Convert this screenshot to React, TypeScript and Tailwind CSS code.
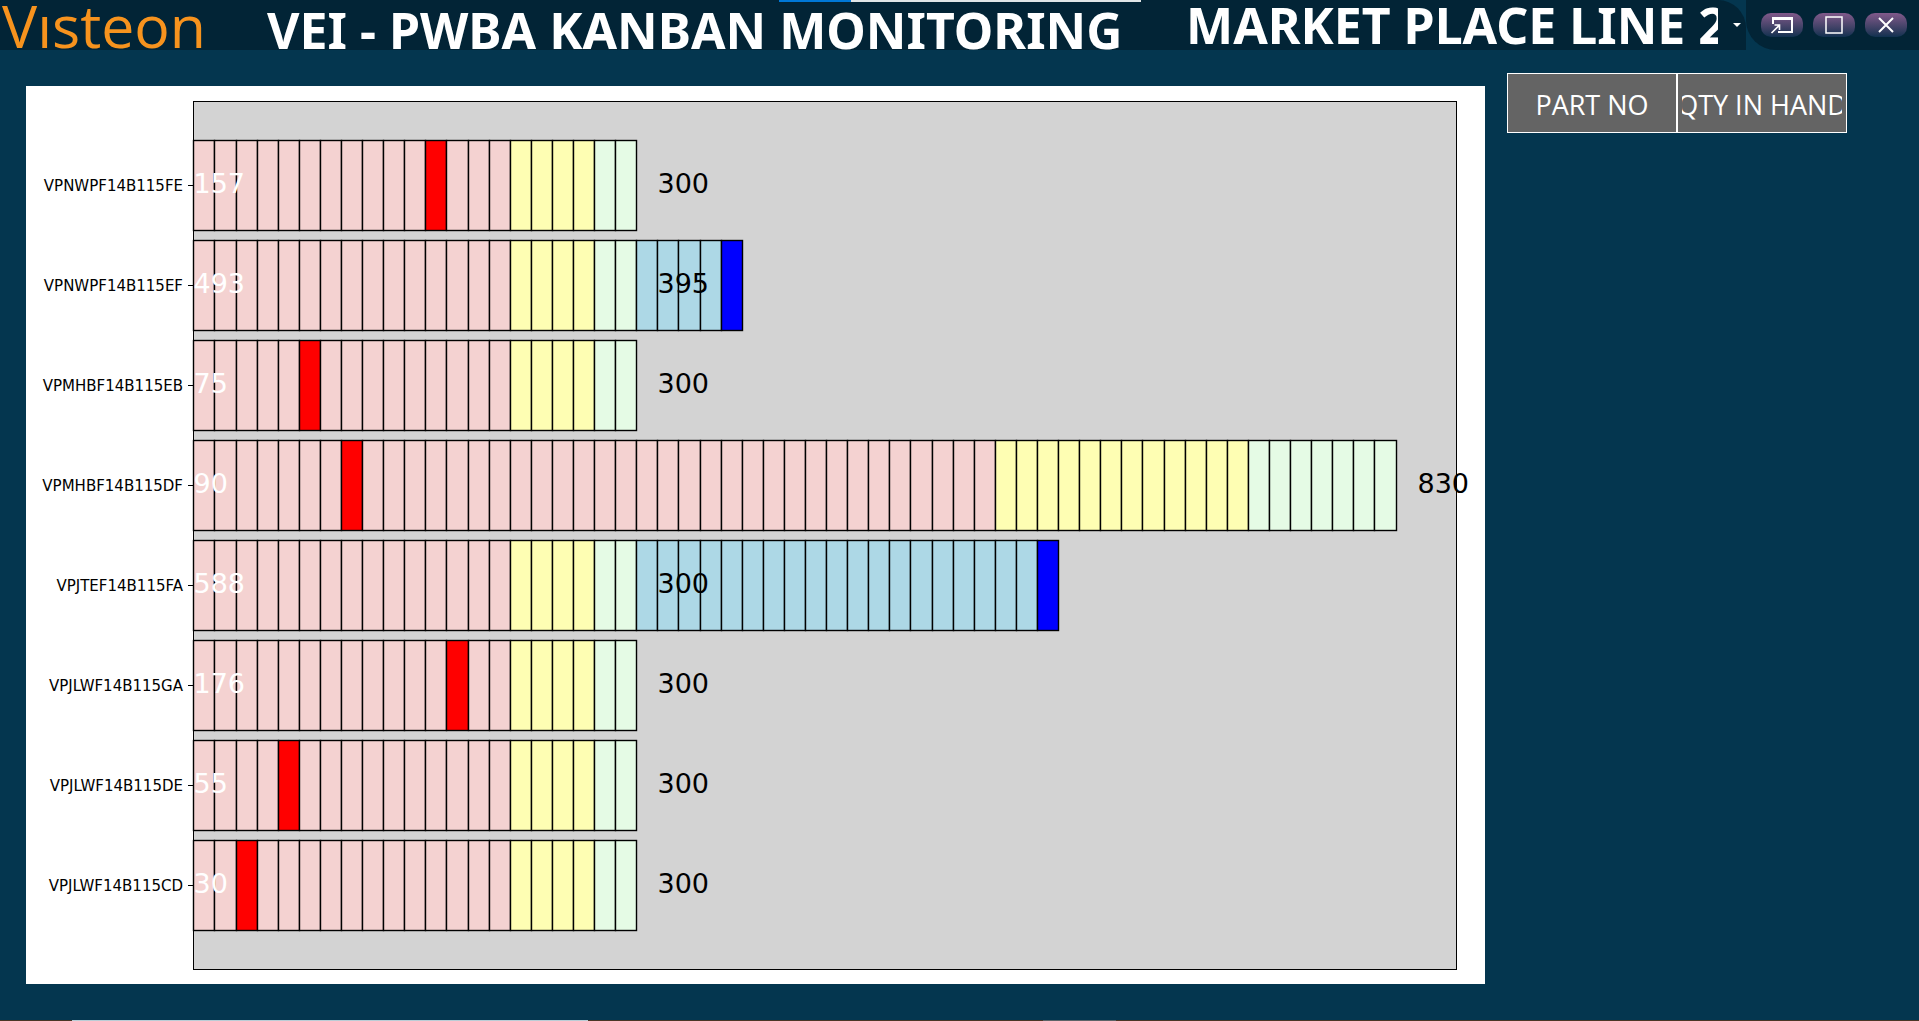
import { useState } from 'react';

type Zone = 'low' | 'mid' | 'ok' | 'over' | 'currentLow' | 'currentOver';

interface Part {
  name: string;
  stock: number;
  target: number;
  low: number;
  mid: number;
  ok: number;
  over: number;
  current: number;
}

const PARTS: Part[] = [
  { name: 'VPNWPF14B115FE', stock: 157, target: 300, low: 15, mid: 4, ok: 2, over: 0, current: 11 },
  { name: 'VPNWPF14B115EF', stock: 493, target: 395, low: 15, mid: 4, ok: 2, over: 5, current: 25 },
  { name: 'VPMHBF14B115EB', stock: 75, target: 300, low: 15, mid: 4, ok: 2, over: 0, current: 5 },
  { name: 'VPMHBF14B115DF', stock: 90, target: 830, low: 38, mid: 12, ok: 7, over: 0, current: 7 },
  { name: 'VPJTEF14B115FA', stock: 588, target: 300, low: 15, mid: 4, ok: 2, over: 20, current: 40 },
  { name: 'VPJLWF14B115GA', stock: 176, target: 300, low: 15, mid: 4, ok: 2, over: 0, current: 12 },
  { name: 'VPJLWF14B115DE', stock: 55, target: 300, low: 15, mid: 4, ok: 2, over: 0, current: 4 },
  { name: 'VPJLWF14B115CD', stock: 30, target: 300, low: 15, mid: 4, ok: 2, over: 0, current: 2 },
];

const ZONE_FILL: Record<Zone, string> = {
  low: 'fill-[#f4d2d1]',
  mid: 'fill-[#fefeb3]',
  ok: 'fill-[#e5fbe5]',
  over: 'fill-[#add8e6]',
  currentLow: 'fill-[#ff0000]',
  currentOver: 'fill-[#0000ff]',
};

const AXIS_X = 167;
const AXIS_Y = 15;
const AXIS_W = 1263;
const AXIS_H = 868;
const CELL = 21.09;
const ROW_PITCH = 100;
const BAR_H = 90;
const FIRST_BAR = 54;

const cellX = (index: number) => AXIS_X + Math.floor(index * CELL + 0.88) + 0.5;

function zoneOf(part: Part, index: number): Zone {
  const full = part.low + part.mid + part.ok;
  if (index === part.current) return index >= full ? 'currentOver' : 'currentLow';
  if (index < part.low) return 'low';
  if (index < part.low + part.mid) return 'mid';
  return index < full ? 'ok' : 'over';
}

function Bar({ part, row }: { part: Part; row: number }) {
  const y = FIRST_BAR + row * ROW_PITCH + 0.5;
  const full = part.low + part.mid + part.ok;
  const cells = Array.from({ length: full + part.over }, (_, i) => i);
  return (
    <g>
      <text x={157} y={y + 50} textAnchor="end" className="fill-black text-[15px]">
        {part.name}
      </text>
      <line x1={162} x2={AXIS_X} y1={y + 45} y2={y + 45} className="stroke-black" />
      {cells.map((i) => (
        <rect
          key={i}
          x={cellX(i)}
          y={y}
          width={cellX(i + 1) - cellX(i)}
          height={BAR_H}
          strokeWidth={1.4}
          className={`stroke-black ${ZONE_FILL[zoneOf(part, i)]}`}
        />
      ))}
      <text x={cellX(0)} y={y + 52} className="fill-white text-[27px]">
        {part.stock}
      </text>
      <text x={cellX(full + 1)} y={y + 52} className="fill-black text-[27px]">
        {part.target}
      </text>
    </g>
  );
}

function KanbanChart() {
  return (
    <svg
      viewBox="0 0 1459 898"
      role="img"
      aria-label="Kanban stock per part number"
      className="block h-auto w-full bg-white font-['DejaVu_Sans',sans-serif]"
    >
      <rect
        x={AXIS_X + 0.5}
        y={AXIS_Y + 0.5}
        width={AXIS_W}
        height={AXIS_H}
        className="fill-[#d3d3d3] stroke-black"
      />
      {PARTS.map((part, row) => (
        <Bar key={part.name} part={part} row={row} />
      ))}
    </svg>
  );
}

const windowButton =
  'flex h-6 w-[42px] items-center justify-center rounded-[10px] bg-linear-to-b from-[#81598a] to-[#0f3150] text-white';

function WindowControls() {
  return (
    <div className="flex h-full shrink-0 items-center gap-2.5 rounded-bl-[30px] bg-[#022436] pr-3 pl-[15px]">
      <button type="button" aria-label="Restore" className={windowButton}>
        <svg viewBox="0 0 24 18" className="h-[18px] w-6" fill="none" stroke="currentColor" strokeWidth="2">
          <path d="M3 8V2H22V16H8" />
          <path d="M2 2.5H23" strokeWidth="3" />
          <path d="M1.500 17L9.500 9M4.500 9H9.500V14" strokeWidth="1.600" />
        </svg>
      </button>
      <button type="button" aria-label="Maximize" className={windowButton}>
        <svg viewBox="0 0 18 18" className="h-[18px] w-[18px]" fill="none" stroke="currentColor" strokeWidth="1.500">
          <rect x="1" y="1" width="16" height="16" />
        </svg>
      </button>
      <button type="button" aria-label="Close" className={windowButton}>
        <svg viewBox="0 0 16 16" className="h-4 w-4" fill="none" stroke="currentColor" strokeWidth="2">
          <path d="M1 1L15 15M15 1L1 15" />
        </svg>
      </button>
    </div>
  );
}

export default function App() {
  const [line, setLine] = useState('MARKET PLACE LINE 2');
  return (
    <div className="relative flex min-h-screen flex-col overflow-hidden bg-[#04364f] font-['Open_Sans',sans-serif] text-white">
      <header className="flex h-[50px]">
        <div className="flex h-full min-w-0 flex-1 items-center rounded-tr-[28px] bg-[#022436]">
          <div className="w-[267px] shrink-0 pl-0.5 text-[59px] leading-[50px] font-medium text-[#f7931e]">Vısteon</div>
          <h1 className="min-w-0 flex-1 pt-2.5 font-['Noto_Sans',sans-serif] text-[50px] leading-[50px] font-bold whitespace-nowrap">
            VEI - PWBA KANBAN MONITORING
          </h1>
          <div className="relative h-full w-[564px] shrink-0">
            <select
              aria-label="Line"
              value={line}
              onChange={(e) => setLine(e.target.value)}
              className="h-full w-full appearance-none bg-transparent pr-7 pl-1 font-['Noto_Sans',sans-serif] text-[50px] leading-[50px] font-bold outline-none"
            >
              <option>MARKET PLACE LINE 2</option>
            </select>
            <svg viewBox="0 0 8 4" className="pointer-events-none absolute top-[23px] right-[5px] h-1 w-2 fill-white">
              <path d="M0 0H8L4 4Z" />
            </svg>
          </div>
        </div>
        <WindowControls />
      </header>

      <div className="absolute top-0 left-[779px] flex h-0.5 w-[362px] bg-[#e0e5e6]">
        <div className="w-[72px] bg-[#0078d7]" />
      </div>

      <main className="flex flex-1 items-start gap-[22px] pl-[26px]">
        <section className="mt-9 min-w-0 flex-1">
          <KanbanChart />
        </section>
        <aside className="mt-[23px] w-[412px] shrink-0">
          <table className="w-[340px] table-fixed border-separate border-spacing-0 bg-[#646464] text-[27px]">
            <thead>
              <tr className="h-[60px]">
                <th className="border border-white px-1 pt-1 pb-0 font-normal">PART NO</th>
                <th className="border border-white px-1 pt-1 pb-0 font-normal">
                  <div className="flex justify-center overflow-hidden whitespace-nowrap">QTY IN HAND</div>
                </th>
              </tr>
            </thead>
          </table>
        </aside>
      </main>

      <footer className="flex h-px bg-[#4a3626]">
        <div className="ml-[72px] w-[516px] bg-[#b9cdd6]" />
        <div className="ml-[455px] w-[73px] bg-[#5c6468]" />
      </footer>
    </div>
  );
}
